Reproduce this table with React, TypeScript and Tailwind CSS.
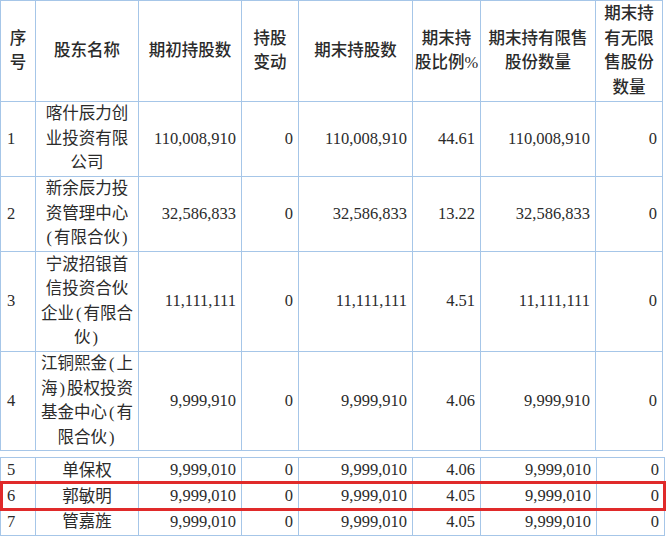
import React from "react";

const font = { fontFamily: '"Liberation Serif", "Noto Sans CJK SC", serif' };

type Row = { no: string; name: string[]; a: string; b: string; c: string; d: string; e: string; f: string; h: string };

const top: Row[] = [
  { no: "1", name: ["喀什辰力创", "业投资有限", "公司"], a: "110,008,910", b: "0", c: "110,008,910", d: "44.61", e: "110,008,910", f: "0", h: "h-[75px]" },
  { no: "2", name: ["新余辰力投", "资管理中心", "(有限合伙)"], a: "32,586,833", b: "0", c: "32,586,833", d: "13.22", e: "32,586,833", f: "0", h: "h-[75px]" },
  { no: "3", name: ["宁波招银首", "信投资合伙", "企业(有限合", "伙)"], a: "11,111,111", b: "0", c: "11,111,111", d: "4.51", e: "11,111,111", f: "0", h: "h-[100px]" },
  { no: "4", name: ["江铜熙金(上", "海)股权投资", "基金中心(有", "限合伙)"], a: "9,999,910", b: "0", c: "9,999,910", d: "4.06", e: "9,999,910", f: "0", h: "h-[98px]" },
];

const bottom: Row[] = [
  { no: "5", name: ["单保权"], a: "9,999,010", b: "0", c: "9,999,010", d: "4.06", e: "9,999,010", f: "0", h: "h-[26px]" },
  { no: "6", name: ["郭敏明"], a: "9,999,010", b: "0", c: "9,999,010", d: "4.05", e: "9,999,010", f: "0", h: "h-[26px]" },
  { no: "7", name: ["管嘉旌"], a: "9,999,010", b: "0", c: "9,999,010", d: "4.05", e: "9,999,010", f: "0", h: "h-[25px]" },
];

const cell = "border border-[#a6c6e8] align-middle p-0";
const num = `${cell} text-right pr-[5px] whitespace-nowrap`;

function Cols({ last, prev }: { last: number; prev: number }) {
  return (
    <colgroup>
      <col style={{ width: 35 }} />
      <col style={{ width: 103 }} />
      <col style={{ width: 103 }} />
      <col style={{ width: 57 }} />
      <col style={{ width: 114 }} />
      <col style={{ width: 68 }} />
      <col style={{ width: prev }} />
      <col style={{ width: last }} />
    </colgroup>
  );
}

function withParens(l: string) {
  const parts = l.split(/([()])/);
  return parts.map((p, i) =>
    p === "(" || p === ")" ? (
      <span key={i} className="px-[2px]">
        {p}
      </span>
    ) : (
      <React.Fragment key={i}>{p}</React.Fragment>
    )
  );
}

function Lines({ lines }: { lines: string[] }) {
  return (
    <>
      {lines.map((l, i) => (
        <div key={i} className="whitespace-nowrap">
          {withParens(l)}
        </div>
      ))}
    </>
  );
}

function BodyRow({ r, lh }: { r: Row; lh: string }) {
  return (
    <tr className={r.h}>
      <td className={`${cell} text-left pl-[6px]`}>{r.no}</td>
      <td className={`${cell} text-center ${lh}`}>
        <Lines lines={r.name} />
      </td>
      <td className={num}>{r.a}</td>
      <td className={num}>{r.b}</td>
      <td className={num}>{r.c}</td>
      <td className={num}>{r.d}</td>
      <td className={num}>{r.e}</td>
      <td className={num}>{r.f}</td>
    </tr>
  );
}

export default function App() {
  return (
    <div className="w-[666px] h-[536px] bg-white text-[#2b2b2b] text-[16.5px] overflow-hidden" style={font}>
      <table className="border-collapse table-fixed w-[662px]">
        <Cols prev={115} last={67} />
        <thead>
          <tr className="h-[101px] font-medium text-center leading-[24.5px]">
            <th className={`${cell} font-medium`}><Lines lines={["序", "号"]} /></th>
            <th className={`${cell} font-medium`}>股东名称</th>
            <th className={`${cell} font-medium`}>期初持股数</th>
            <th className={`${cell} font-medium`}><Lines lines={["持股", "变动"]} /></th>
            <th className={`${cell} font-medium`}>期末持股数</th>
            <th className={`${cell} font-medium`}><Lines lines={["期末持", "股比例%"]} /></th>
            <th className={`${cell} font-medium`}><Lines lines={["期末持有限售", "股份数量"]} /></th>
            <th className={`${cell} font-medium`}><Lines lines={["期末持", "有无限", "售股份", "数量"]} /></th>
          </tr>
        </thead>
        <tbody>
          {top.map((r) => (
            <BodyRow key={r.no} r={r} lh="leading-[24.5px]" />
          ))}
        </tbody>
      </table>
      <div className="relative mt-[6px]">
        <table className="border-collapse table-fixed w-[664px]">
          <Cols prev={116} last={68} />
          <tbody>
            {bottom.map((r) => (
              <BodyRow key={r.no} r={r} lh="leading-[24px]" />
            ))}
          </tbody>
        </table>
        <div className="absolute left-0 top-[24px] w-[666px] h-[30px] border-[3px] border-[#e02a2a] pointer-events-none" />
      </div>
    </div>
  );
}
